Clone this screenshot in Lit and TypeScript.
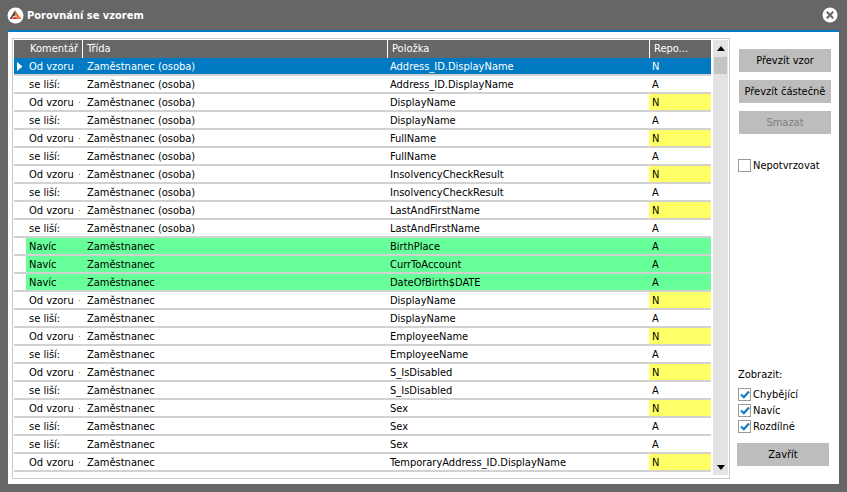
import { LitElement, html, css, svg } from 'lit';
import { customElement } from 'lit/decorators.js';

type Row = { c: string; t: string; p: string; r: string; kind?: string };

const OSOBA = 'Zaměstnanec (osoba)';
const ZAM = 'Zaměstnanec';

const pair = (t: string, p: string): Row[] => [
  { c: 'Od vzoru', t, p, r: 'N' },
  { c: 'se liší:', t, p, r: 'A' },
];

const rows: Row[] = [
  { c: 'Od vzoru', t: OSOBA, p: 'Address_ID.DisplayName', r: 'N', kind: 'selected' },
  { c: 'se liší:', t: OSOBA, p: 'Address_ID.DisplayName', r: 'A' },
  ...pair(OSOBA, 'DisplayName'),
  ...pair(OSOBA, 'FullName'),
  ...pair(OSOBA, 'InsolvencyCheckResult'),
  ...pair(OSOBA, 'LastAndFirstName'),
  { c: 'Navíc', t: ZAM, p: 'BirthPlace', r: 'A', kind: 'extra' },
  { c: 'Navíc', t: ZAM, p: 'CurrToAccount', r: 'A', kind: 'extra' },
  { c: 'Navíc', t: ZAM, p: 'DateOfBirth$DATE', r: 'A', kind: 'extra' },
  ...pair(ZAM, 'DisplayName'),
  ...pair(ZAM, 'EmployeeName'),
  ...pair(ZAM, 'S_IsDisabled'),
  ...pair(ZAM, 'Sex'),
  { c: 'se liší:', t: ZAM, p: 'Sex', r: 'A' },
  { c: 'Od vzoru', t: ZAM, p: 'TemporaryAddress_ID.DisplayName', r: 'N' },
];

@customElement('app-root')
export class AppRoot extends LitElement {
  static styles = css`
    :host {
      display: block;
      width: 847px;
      height: 492px;
      background: #666666;
      font-family: 'DejaVu Sans Condensed', 'DejaVu Sans', sans-serif;
      font-stretch: condensed;
      font-size: 11px;
      color: #000;
      overflow: hidden;
    }
    .titlebar {
      height: 30px;
      display: flex;
      align-items: center;
      padding: 0 9px 0 7px;
      gap: 3px;
      color: #fff;
      font-weight: bold;
    }
    .titlebar .name { flex: 1; }
    .body {
      margin: 0 8px;
      height: 454px;
      box-sizing: border-box;
      background: #fff;
      border-top: 2px solid #007ac3;
      display: flex;
      padding: 6px 0 6px 4px;
    }
    .frame {
      width: 719px;
      height: 441px;
      box-sizing: border-box;
      border: 1px solid #c8c8c8;
      padding: 1px;
      display: flex;
      overflow: hidden;
    }
    .grid { width: 697px; }
    .row {
      display: grid;
      grid-template-columns: 12px 56px 305px 262px 62px;
      height: 18px;
      box-sizing: border-box;
      line-height: 18px;
      border-bottom: 2px solid #d2d2d2;
    }
    .row > div { padding-left: 3px; white-space: nowrap; overflow: hidden; }
    .row > .tr { padding-left: 5px; }
    .head {
      background: #666666;
      color: #fff;
      border-bottom: 0;
    }
    .head > div { border-left: 1px solid #fff; padding-left: 4px; }
    .head > div:first-child { border-left: 0; }
    .head > .komentar { border-left: 0; }
    .marker { padding: 0 !important; display: flex; align-items: center; justify-content: center; }
    .selected { background: #007ac3; color: #fff; }
    .extra .cell { background: #66ff99; }
    .extra .r { background: #66ff99; }
    .yellow { background: #ffff66; }
    .comment { position: relative; }
    .dot {
      position: absolute;
      right: 2px;
      top: 8px;
      width: 1px;
      height: 1px;
      background: #888;
    }
    .scroll {
      width: 17px;
      margin-left: 2px;
      background: #e3e3e3;
      display: flex;
      flex-direction: column;
      align-items: center;
      height: 435px;
    }
    .scroll .thumb { width: 13px; height: 17px; background: #c4c4c4; margin-top: 1px; }
    .scroll .arrow { height: 16px; display: flex; align-items: center; }
    .scroll .grow { flex: 1; }
    .side {
      flex: 1;
      padding: 11px 8px 0 8px;
      display: flex;
      flex-direction: column;
    }
    button {
      display: block;
      width: 92px;
      height: 23px;
      margin: 0 0 8px 1px;
      padding: 0;
      border: 0;
      background: #bdbdbd;
      font: inherit;
      color: #000;
    }
    button[disabled] { color: #7f7f7f; }
    button.close { margin: 0 0 0 -1px; }
    .check {
      display: flex;
      align-items: center;
      gap: 2px;
      height: 16px;
    }
    .box {
      width: 11px;
      height: 11px;
      border: 1px solid #9a9a9a;
      background: #fff;
      display: flex;
      align-items: center;
      justify-content: center;
    }
    .nepo { margin-top: 15px; }
    .spacer { flex: 1; }
    .show { margin-bottom: 5px; }
    .close-wrap { margin-top: 9px; margin-bottom: 12px; }
  `;

  private logo() {
    return html`<svg width="17" height="17" viewBox="0 0 17 17">
      <circle cx="8.5" cy="8.5" r="8" fill="#fff" />
      <path d="M2.5 12 L8 3.5 L11 8 Q6 8 4.5 12 Z" fill="#444" />
      <path d="M8 3.5 L14.5 12 L10 12 Q10.5 8.5 8 8 Z" fill="#e8762c" />
      <path d="M4.5 12 Q7 9 9.5 9.5 L10 12 Z" fill="#e23b2e" />
    </svg>`;
  }

  private closeIcon() {
    return html`<svg width="16" height="16" viewBox="0 0 16 16">
      <circle cx="8" cy="8" r="7.5" fill="#fff" />
      <path d="M4.8 4.8 L11.2 11.2 M11.2 4.8 L4.8 11.2" stroke="#666" stroke-width="2" fill="none" />
    </svg>`;
  }

  private tick() {
    return svg`<svg width="10" height="9" viewBox="0 0 10 9">
      <path d="M1 4.5 L3.8 7.2 L9 1.5" stroke="#0a7fc4" stroke-width="2.2" fill="none" />
    </svg>`;
  }

  private renderRow(row: Row) {
    const cls = row.kind ?? '';
    const yellow = row.r === 'N' && cls !== 'selected';
    return html`<div class="row ${cls}">
      <div class="marker">
        ${cls === 'selected'
          ? html`<svg width="6" height="9" viewBox="0 0 6 9"><path d="M0 0 L5.5 4.5 L0 9 Z" fill="#fff" /></svg>`
          : ''}
      </div>
      <div class="cell comment">${row.c}${row.c === 'Od vzoru' ? html`<span class="dot"></span>` : ''}</div>
      <div class="cell tr">${row.t}</div>
      <div class="cell">${row.p}</div>
      <div class="r ${yellow ? 'yellow' : ''}">${row.r}</div>
    </div>`;
  }

  private check(label: string, on: boolean) {
    return html`<div class="check">
      <span class="box">${on ? this.tick() : ''}</span><span>${label}</span>
    </div>`;
  }

  render() {
    return html`
      <div class="titlebar">
        ${this.logo()}
        <span class="name">Porovnání se vzorem</span>
        ${this.closeIcon()}
      </div>
      <div class="body">
        <div class="frame">
          <div class="grid">
            <div class="row head">
              <div></div>
              <div class="komentar">Komentář</div>
              <div>Třída</div>
              <div>Položka</div>
              <div>Repo...</div>
            </div>
            ${rows.map((r) => this.renderRow(r))}
          </div>
          <div class="scroll">
            <div class="arrow">
              <svg width="8" height="5" viewBox="0 0 8 5"><path d="M0 5 L4 0 L8 5 Z" fill="#000" /></svg>
            </div>
            <div class="thumb"></div>
            <div class="grow"></div>
            <div class="arrow">
              <svg width="8" height="5" viewBox="0 0 8 5"><path d="M0 0 L8 0 L4 5 Z" fill="#000" /></svg>
            </div>
          </div>
        </div>
        <div class="side">
          <button>Převzít vzor</button>
          <button>Převzít částečně</button>
          <button disabled>Smazat</button>
          <div class="nepo">${this.check('Nepotvrzovat', false)}</div>
          <div class="spacer"></div>
          <div class="show">Zobrazit:</div>
          ${this.check('Chybějící', true)}
          ${this.check('Navíc', true)}
          ${this.check('Rozdílné', true)}
          <div class="close-wrap"><button class="close">Zavřít</button></div>
        </div>
      </div>
    `;
  }
}
